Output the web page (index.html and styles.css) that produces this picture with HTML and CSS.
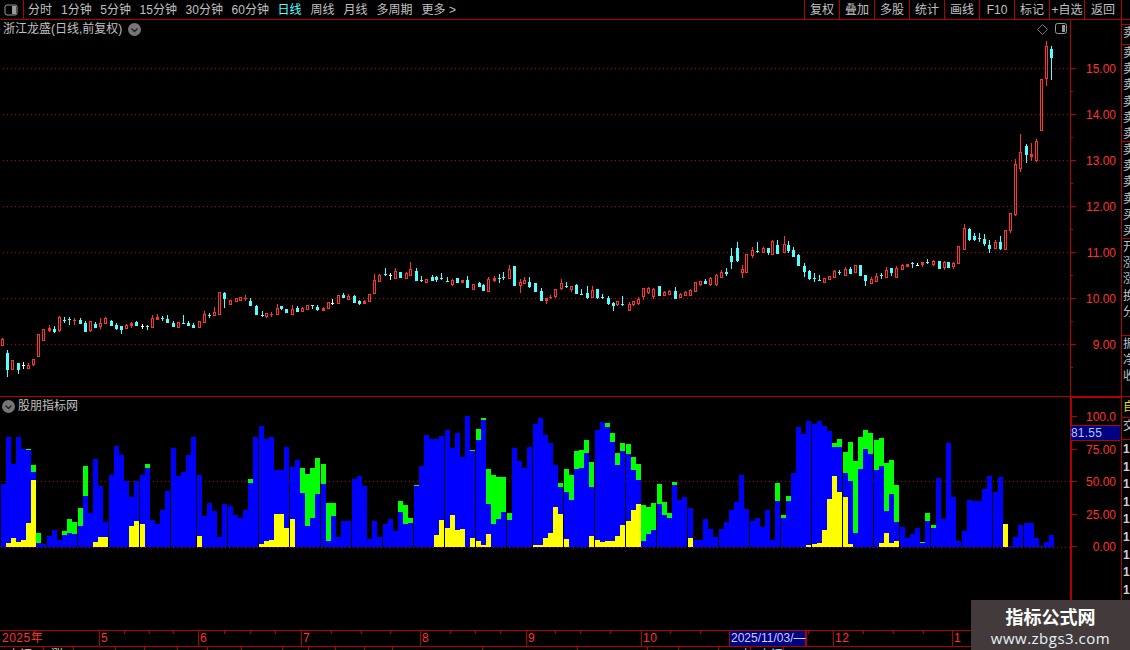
FILE: index.html
```html
<!DOCTYPE html>
<html lang="zh">
<head>
<meta charset="utf-8">
<title>浙江龙盛</title>
<link rel="stylesheet" href="styles.css">
</head>
<body>
<div class="app">
  <header class="toolbar">
    <button class="layout-btn" aria-label="layout">
      <svg width="14" height="12" viewBox="0 0 14 12"><rect x="1" y="1" width="12" height="10" rx="2" class="ico-line"/><rect x="8" y="2" width="4" height="8" class="ico-fill"/></svg>
    </button>
    <nav class="periods">
      <span>分时</span><span class="num">1分钟</span><span class="num">5分钟</span><span class="num">15分钟</span><span class="num">30分钟</span><span class="num">60分钟</span><span class="active">日线</span><span>周线</span><span>月线</span><span>多周期</span><span>更多 &gt;</span>
    </nav>
    <div class="actions">
      <span>复权</span><span>叠加</span><span>多股</span><span>统计</span><span>画线</span><span>F10</span><span>标记</span><span>+自选</span><span class="last">返回</span>
    </div>
  </header>

  <div class="workspace">
    <div class="charts">
      <section class="panel panel-main">
        <div class="plot">
          <svg id="candles" class="fill-svg"></svg>
          <div class="title-row">
            <span>浙江龙盛(日线,前复权)</span>
            <svg class="chev" width="13" height="13" viewBox="0 0 13 13"><circle cx="6.5" cy="6.5" r="6.5" class="chev-bg"/><path d="M3.5 5.5l3 3 3-3" class="chev-line"/></svg>
          </div>
          <div class="tools">
            <svg width="11" height="11" viewBox="0 0 11 11"><path d="M5.5 .5l5 5-5 5-5-5z" class="tool-line"/></svg>
            <svg width="13" height="12" viewBox="0 0 13 12"><rect x=".5" y=".5" width="11" height="10" rx="2" class="ico-line"/><rect x="7" y="2" width="3" height="7" class="ico-fill"/></svg>
          </div>
        </div>
        <svg id="price-axis" class="axis"></svg>
      </section>
      <section class="panel panel-ind">
        <div class="plot">
          <svg id="bars" class="fill-svg"></svg>
          <div class="title-row ind-title">
            <svg class="chev" width="13" height="13" viewBox="0 0 13 13"><circle cx="6.5" cy="6.5" r="6.5" class="chev-bg"/><path d="M3.5 5.5l3 3 3-3" class="chev-line"/></svg>
            <span>股朋指标网</span>
          </div>
        </div>
        <div class="axis-wrap">
          <svg id="ind-axis" class="axis axis-ind"></svg>
          <div class="value-tag">81.55</div>
        </div>
      </section>
    </div>
    <aside class="side" id="side"></aside>
  </div>

  <div class="timeaxis" id="timeaxis"></div>
  <div class="statusbar" id="statusbar"></div>

  <div class="watermark">
    <strong>指标公式网</strong>
    <span>www.zbgs3.com</span>
  </div>
</div>
<script src="chart.js"></script>
</body>
</html>
```

FILE: styles.css
```css
* { box-sizing: border-box; }
html, body { margin: 0; padding: 0; background: #000; }
body {
  width: 1130px;
  height: 650px;
  overflow: hidden;
  font: 12px/1 "Liberation Sans", "Noto Sans CJK SC", sans-serif;
  color: #c0c0c0;
}
.app { position: relative; width: 1130px; height: 650px; display: flex; flex-direction: column; overflow: hidden; }

.toolbar { display: flex; height: 20px; flex: none; border-bottom: 1px solid #b00000; align-items: stretch; }
.layout-btn { width: 24px; padding: 0 0 0 4px; background: none; border: 0; border-right: 1px solid #b00000; display: flex; align-items: center; }
.ico-line { fill: none; stroke: #9a9a9a; stroke-width: 1; }
.ico-fill { fill: #9a9a9a; }
.periods { display: flex; gap: 9px; padding-left: 4px; align-items: center; white-space: nowrap; }
.periods .num { margin-right: -.4px; }
.periods .active { color: #54ffff; }
.actions { display: flex; margin-left: auto; margin-right: 8px; }
.actions span { width: 35px; border-left: 1px solid #b00000; display: flex; align-items: center; justify-content: center; white-space: nowrap; }
.actions .last { width: 38px; border-right: 1px solid #b00000; }

.workspace { display: flex; height: 610px; flex: none; }
.charts { width: 1121px; display: flex; flex-direction: column; flex: none; }
.panel { display: flex; flex: none; }
.panel-main { height: 377px; border-bottom: 1px solid #b00000; }
.panel-ind { height: 233px; }
.plot { position: relative; width: 1070px; flex: none; }
.fill-svg { display: block; width: 1070px; height: 100%; }
.axis { display: block; width: 51px; height: 100%; flex: none; }
.axis-wrap { position: relative; width: 51px; flex: none; border-top: 1px solid #b00000; }
.axis-ind { height: 232px; }

.title-row { position: absolute; left: 3px; top: 2px; display: flex; align-items: center; gap: 6px; white-space: nowrap; line-height: 14px; }
.chev { flex: none; display: block; }
.chev-bg { fill: #777; }
.chev-line { fill: none; stroke: #222; stroke-width: 1.4; }
.ind-title { left: 2px; top: 2px; gap: 3px; }
.tools { position: absolute; right: 2px; top: 3px; display: flex; align-items: center; gap: 7px; }
.tool-line { fill: none; stroke: #777; stroke-width: 1; }

.value-tag {
  position: absolute; left: 1px; top: 27px; width: 49px; height: 16px;
  background: #000080; border-top: 1px solid #b00000; border-bottom: 1px solid #b00000;
  color: #b9c4ff; line-height: 14px; letter-spacing: .2px;
}

.side { width: 9px; flex: none; border-left: 1px solid #b00000; overflow: hidden; display: flex; flex-direction: column; font-size: 12px; }
.cell { flex: none; overflow: hidden; width: 12px; padding-left: 1px; border-bottom: 1px solid #b00000; line-height: 16.2px; white-space: pre-line; }
.cell-yellow { color: #e0e000; line-height: 20px; }
.cell-nums { border-bottom: 0; line-height: 17.6px; padding-top: 1px; font-weight: 700; color: #d0d0d0; }

.timeaxis { position: relative; display: flex; height: 17px; flex: none; border-top: 1px solid #b00000; border-bottom: 1px solid #b00000; color: #ff3232; font-size: 12px; }
.tcell { flex: none; border-left: 1px solid #b00000; padding-left: 1px; line-height: 15px; white-space: nowrap; letter-spacing: .5px; }
.tcell:first-child { border-left: 0; padding-left: 2px; }
.tcell.cursor { background: #000080; color: #c8d0ff; border: 1px solid #b00000; border-width: 0 1px; letter-spacing: 0; line-height: 14px; padding-left: 1px; }
.tick { position: absolute; top: 0; width: 1px; height: 3px; background: #b00000; }

.statusbar { display: flex; flex: 1; overflow: hidden; color: #d0d0d0; }
.scell { flex: none; border-left: 1px solid #b00000; padding-top: 1px; white-space: nowrap; line-height: 14px; }
.scell:first-child { border-left: 0; }
.scell.up { color: #54ffff; }

.watermark {
  position: absolute; left: 971px; top: 600px; width: 159px; height: 50px;
  background: #433b3b; color: #fff;
  display: flex; flex-direction: column; align-items: center; padding-top: 5px; gap: 3px;
}
.watermark strong { font-size: 18px; line-height: 22px; font-family: "Noto Sans CJK SC", sans-serif; }
.watermark span { font-size: 15px; line-height: 17px; letter-spacing: .5px; color: #e8f2fa; font-family: "Open Sans", sans-serif; }

.lbl { fill: #ff3232; font: 12px "Liberation Sans", sans-serif; text-anchor: end; }
```

FILE: chart.js
```js
const NS = 'http://www.w3.org/2000/svg';
const RED = '#ff3232', CYAN = '#54ffff', WHITE = '#ffffff', LINE = '#b00000', DOT = '#c00000';

function el(parent, name, attrs, text) {
  const e = document.createElementNS(NS, name);
  for (const k in attrs) e.setAttribute(k, attrs[k]);
  if (text !== undefined) e.textContent = text;
  parent.appendChild(e);
  return e;
}
const rect = (p, x, y, w, h, fill) => el(p, 'rect', { x, y, width: w, height: h, fill, 'shape-rendering': 'crispEdges' });

function setup(id, vb) {
  const s = document.getElementById(id);
  s.setAttribute('viewBox', vb);
  s.setAttribute('preserveAspectRatio', 'xMinYMin slice');
  return s;
}
function dotted(s, y, x1, x2) {
  for (let x = x1; x < x2; x += 4) rect(s, x, y, 1, 1, DOT);
}

/* ---------- candles: [xz, type, bodyTop, bodyBottom, high, low] ---------- */
const c9 = [[7,'r',118,135,114,135],[22,'c',159,207,150,231],[37,'r',181,207,181,210],[55,'c',189,207,189,222],[69,'w',196,196,186,207],[85,'r',195,204,189,207],[100,'r',178,192,178,198],[115,'r',102,168,102,171],[130,'r',87,119,87,119],[148,'r',84,90,75,96],[163,'c',87,93,78,99],[178,'r',51,90,48,96],[193,'c',60,60,51,69],[208,'c',57,57,51,75],[223,'r',60,60,54,75],[241,'c',60,69,54,72],[256,'c',69,93,63,93],[271,'r',64,90,64,96],[286,'c',72,81,66,84],[301,'r',69,78,54,87],[316,'r',54,69,51,72],[334,'c',63,75,60,78],[349,'c',75,84,69,90],[364,'c',78,87,78,102],[379,'r',75,84,72,84],[394,'r',69,75,66,84],[409,'c',66,75,63,78],[427,'w',78,78,72,87],[442,'c',78,78,75,90],[457,'r',54,81,45,81],[472,'r',51,57,42,57],[487,'c',54,54,48,63],[502,'c',57,66,45,66],[520,'c',69,78,63,81],[535,'r',66,81,66,84],[550,'c',69,69,45,72],[565,'c',69,75,63,75],[580,'c',75,81,69,84],[598,'r',63,81,63,81],[613,'r',42,66,33,69],[628,'c',45,45,39,54],[643,'r',36,45,21,48],[658,'r',-24,42,-24,42],[673,'c',-21,-6,-24,24]];
const c12 = [[0,'r',195,207,195,207],[12,'r',190,199,190,199],[22,'r',186,195,186,195],[32,'r',190,190,181,199],[44,'c',199,210,190,210],[55,'c',213,237,210,240],[68,'c',240,240,228,246],[78,'r',234,244,234,249],[88,'r',237,237,231,246],[100,'r',219,237,207,237],[110,'c',213,219,213,225],[121,'c',222,231,222,231],[134,'r',222,236,210,236],[144,'c',219,228,213,231],[155,'r',219,228,216,231],[166,'r',210,222,210,222],[177,'c',211,211,211,222],[187,'c',216,222,210,228],[200,'r',219,225,216,228],[211,'r',201,219,201,219],[220,'w',204,204,192,210],[233,'r',180,204,180,207],[243,'c',180,186,174,189],[254,'r',183,192,177,192],[266,'c',183,201,180,204],[277,'c',198,204,195,210],[288,'r',198,204,195,207],[298,'r',178,198,178,198],[310,'r',135,174,117,174],[320,'r',120,138,117,141],[332,'c',117,117,99,123],[344,'w',120,120,114,135],[355,'r',108,129,99,129],[365,'c',111,126,111,126],[377,'r',114,129,111,132],[387,'r',102,120,81,120],[400,'c',108,135,99,135],[411,'c',135,135,123,141],[421,'r',132,141,132,141],[433,'c',126,135,120,138],[443,'c',126,132,123,141],[454,'c',129,129,114,135],[466,'c',138,138,126,141],[477,'r',135,147,132,153],[488,'c',129,141,129,141],[499,'r',135,141,135,141],[510,'c',135,156,123,156],[521,'r',147,162,147,162],[534,'c',144,153,141,156],[544,'c',150,165,147,165],[555,'r',132,168,126,171],[566,'r',129,135,123,141],[577,'c',129,129,117,144],[587,'c',126,126,111,135],[600,'r',102,129,90,132],[611,'c',93,150,93,150],[622,'r',141,150,132,174],[632,'r',135,144,126,144],[643,'c',141,153,126,159],[656,'c',144,168,144,171],[667,'c',168,195,159,195],[678,'r',189,195,189,207],[688,'r',186,186,180,192],[699,'r',162,183,162,189],[710,'r',144,159,132,165],[722,'c',153,153,141,159],[733,'r',153,162,153,171],[744,'c',150,174,147,177],[755,'c',177,177,162,177],[766,'c',174,186,153,192],[777,'r',165,186,153,189],[789,'c',162,186,162,192],[800,'c',186,186,177,192],[811,'c',189,204,183,210],[822,'c',204,210,201,228],[832,'r',198,207,198,213],[843,'c',207,207,183,213],[856,'r',207,225,201,228],[866,'r',198,207,198,213],[877,'r',192,204,186,210],[887,'r',159,183,159,195],[898,'r',159,171,156,177],[909,'r',162,183,159,192],[922,'c',153,180,153,180],[933,'r',171,180,168,183],[944,'r',168,177,165,180],[955,'c',168,189,156,192],[966,'r',177,186,174,189],[977,'r',171,180,168,183],[988,'r',165,180,162,180],[999,'r',141,168,141,168],[1010,'r',138,147,138,153],[1021,'c',138,144,132,144],[1032,'r',129,147,126,153],[1043,'r',120,147,117,153],[1055,'r',111,126,105,126],[1066,'c',111,114,99,123],[1077,'c',63,78,39,102],[1088,'c',39,75,21,81],[1099,'r',102,111,90,129],[1109,'r',57,111,57,111],[1122,'r',45,60,36,69],[1133,'c',48,48,21,54],[1144,'r',39,51,36,54],[1155,'c',39,51,39,60],[1165,'r',18,57,15,60],[1176,'c',30,54,15,54],[1189,'r',27,51,3,54],[1199,'c',30,45,18,54],[1210,'c',45,63,36,66],[1220,'c',60,90,57,93],[1232,'c',93,108,84,126],[1243,'c',108,129,105,135],[1255,'c',129,129,114,141],[1266,'c',135,135,120,138],[1276,'r',129,141,129,141],[1287,'r',123,132,123,135],[1298,'r',108,126,105,126],[1309,'c',111,111,105,120],[1321,'r',102,120,96,120],[1332,'c',102,114,96,117],[1343,'r',90,111,90,111],[1354,'c',90,120,90,120],[1365,'c',120,135,120,153],[1376,'r',132,144,126,144],[1388,'r',123,138,114,138],[1399,'c',120,120,114,132],[1410,'r',105,126,96,129],[1420,'c',99,111,99,123],[1431,'r',99,126,93,126],[1443,'r',90,102,87,105],[1454,'r',87,93,87,96],[1465,'c',84,84,81,99],[1475,'w',90,90,84,93],[1487,'r',81,87,81,96],[1498,'c',81,81,72,87],[1510,'r',78,87,75,93],[1522,'c',78,99,78,99],[1533,'r',81,96,78,105],[1543,'c',81,96,81,99]];
const c10 = [[10,'r',699,708,696,717],[25,'r',648,699,648,699],[43,'r',594,657,582,657],[58,'c',597,627,594,633],[73,'c',618,627,609,633],[88,'c',624,624,609,636],[103,'c',627,639,612,648],[118,'c',645,654,630,669],[136,'r',636,654,630,654],[151,'c',636,654,618,660],[166,'r',600,657,600,657],[181,'r',549,600,549,609],[196,'r',402,552,387,558],[211,'r',366,414,312,426],[229,'c',348,372,342,399],[244,'r',372,378,339,393],[259,'r',333,390,327,396],[274,'r',148,300,148,300],[289,'r',48,144,33,168],[304,'c',57,81,48,150]];

function drawCandle(s, cx, type, top, bot, hi, lo) {
  const col = type === 'r' ? RED : type === 'c' ? CYAN : WHITE;
  rect(s, cx, hi, 1, Math.max(lo - hi, 1), col);
  const h = bot - top;
  if (h < 1) {
    rect(s, cx - 1, top, 3, 1, col);
  } else if (type === 'r' && h >= 3) {
    rect(s, cx - 1, top, 3, h + 1, col);
    rect(s, cx, top + 1, 1, h - 1, '#000');
  } else {
    rect(s, cx - 1, top, 3, h + 1, col);
  }
}

const main = setup('candles', '0 20 1070 376');
[68, 114, 160, 206, 252, 298, 344].forEach(y => dotted(main, y, 3, 1070));
c9.forEach(c => drawCandle(main, Math.round(c[0] / 3), c[1], 300 + Math.round(c[2] / 3), 300 + Math.round(c[3] / 3), 300 + Math.round(c[4] / 3), 300 + Math.round(c[5] / 3)));
c12.forEach(c => drawCandle(main, Math.round(230 + c[0] / 2.148), c[1], 235 + Math.round(c[2] / 3), 235 + Math.round(c[3] / 3), 235 + Math.round(c[4] / 3), 235 + Math.round(c[5] / 3)));
c10.forEach(c => drawCandle(main, Math.round(950 + c[0] / 3), c[1], 30 + Math.round(c[2] / 3), 30 + Math.round(c[3] / 3), 30 + Math.round(c[4] / 3), 30 + Math.round(c[5] / 3)));

/* ---------- price axis ---------- */
const pa = setup('price-axis', '1070 20 51 376');
rect(pa, 1070, 20, 1, 376, LINE);
[['15.00', 68], ['14.00', 114], ['13.00', 160], ['12.00', 206], ['11.00', 252], ['10.00', 298], ['9.00', 344]].forEach(([t, y]) => {
  rect(pa, 1071, y, 5, 1, LINE);
  rect(pa, 1071, y + 23, 2, 1, LINE);
  el(pa, 'text', { x: 1116, y: y + 5, class: 'lbl' }, t);
});

/* ---------- indicator bars: [xz, blueTop, greenTop, yellowTop]; base z = 455 ---------- */
const chunks = [
  [0, [[3,267],[18,126,0,444],[33,207,0,429],[48,126,0,441],[63,162,0,435],[78,165,162,384],[93,231,210,255],[108,444,414],[123,447],[141,423],[156,405],[171,435],[186,420,408],[201,414,372],[216,417,381],[234,393,339],[249,303,213],[264,354],[279,192,0,441],[294,273,0,426],[309,381,0,426],[327,240],[342,153],[357,180],[372,258],[387,306,0,393],[402,258,0,378],[420,240,0,387],[435,219,207],[450,375],[465,387],[480,345],[495,288],[513,159],[528,243],[543,231],[558,180],[573,126],[591,240,0,423],[606,363],[621,324],[636,348],[651,426],[666,327],[684,333],[699,360],[714,369],[729,345],[744,264,252],[759,126],[777,93,0,447],[792,132,0,438],[807,126,0,435]]],
  [270, [[12,225,0,357],[27,225,0,357],[42,156,0,399],[60,216,0,372],[75,195],[90,294,219],[105,393,237],[120,369,219],[135,297,189],[153,267,207],[168,438,324],[183,363,324],[198,426],[213,378],[228,378],[246,252],[261,243],[276,273],[291,432],[306,378],[321,426],[339,387],[354,372],[369,408],[384,351,318],[399,387,330],[414,384,369],[432,273,270],[447,213],[462,120],[477,132],[492,132,0,420],[507,123,0,375],[525,105,0,399],[540,159,0,360],[555,114,0,405],[570,186,0,402],[585,63],[600,168,165,429],[618,135,102,438],[633,75,69,450],[648,327,222,417],[663,387,240],[678,372,246],[693,351,246],[711,375,354],[726,159],[741,198],[756,219],[771,156],[789,87,0,450],[804,69,0,450]]],
  [540, [[9,120,0,429],[24,144,0,414],[39,210,0,336],[54,276,264,357],[72,291,222,432],[87,315,240],[102,222,168],[117,219,165],[132,174,135],[147,276,201,423],[165,105,0,435],[180,81,0,441],[195,96,84,438],[210,141,114,438],[225,210,174,423],[240,168,144,390],[258,177,147,378],[273,225,186,345],[288,255,207,327],[303,438,330],[318,417,336],[333,405,324],[351,327,267],[366,360,321],[381,369,354],[396,270,261],[411,315],[426,306],[444,339,0,429],[459,435],[474,435],[489,372],[504,402],[519,426],[537,402],[552,381],[567,345],[582,321],[597,240],[612,342],[630,378],[645,369],[660,396],[675,345],[690,435],[705,318,264],[723,369,360],[738,318,303]]],
  [790, [[3,234],[18,96],[33,117],[48,78,0,450],[66,87,0,447],[81,78,0,444],[96,93,0,405],[111,108,0,312],[126,156,144,243],[141,156,132,291],[159,234,171,306],[174,258,141,447],[189,414,198],[204,222,126],[219,162,105],[234,177,114],[252,225,135],[267,213,129,444],[282,348,204,414],[297,297,195,444],[312,381,270,438],[330,396],[345,429],[360,417],[375,399],[390,444,441],[405,378,354],[423,399,390],[438,249],[453,372],[468,144],[483,306],[498,438],[516,408],[531,315],[546,318],[561,318],[576,282],[591,243],[609,291],[624,246],[639,387,0,387],[654,453],[669,426],[684,390],[702,384],[717,384],[732,429],[747,453],[762,441],[777,420]]]
];
const ind = setup('bars', '0 397 1070 233');
dotted(ind, 481, 1, 1070);
dotted(ind, 547, 1, 1070);
const Y = z => 395 + Math.round(z / 3);
const BASE = 547;
chunks.forEach(([off, rows]) => rows.forEach(([z, top, g, yl]) => {
  const x = off + Math.round(z / 3);
  rect(ind, x, Y(top), 5, BASE - Y(top), '#0000ff');
  if (g) rect(ind, x, Y(g), 5, Y(top) - Y(g), '#00ff00');
  if (yl) rect(ind, x, Y(yl), 5, BASE - Y(yl), '#ffff00');
}));

/* ---------- indicator axis ---------- */
const ia = setup('ind-axis', '1070 398 51 232');
rect(ia, 1070, 398, 2, 232, LINE);
[['100.0', 416], ['75.00', 449], ['50.00', 481], ['25.00', 514], ['0.00', 546]].forEach(([t, y]) => {
  rect(ia, 1072, y, 5, 1, LINE);
  el(ia, 'text', { x: 1116, y: y + 5, class: 'lbl' }, t);
});

/* ---------- right-hand quote strip, clipped by the window ---------- */
const side = document.getElementById('side');
[
  [5, '', ''], [20, '卖', ''], [97, '卖\n卖\n卖\n卖\n卖\n卖', ''], [97, '卖\n卖\n卖\n卖\n买\n买', ''],
  [97, '开\n涨\n涨\n换\n分\n', ''], [61, '振\n净\n收', ''], [21, '自', 'cell-yellow'], [22, '交', ''],
  [190, '1\n1\n1\n1\n1\n1\n1\n1\n1\n1\n1', 'cell-nums']
].forEach(([h, t, cls]) => {
  const d = document.createElement('div');
  d.className = 'cell ' + cls;
  d.style.height = h + 'px';
  d.textContent = t;
  side.appendChild(d);
});

/* ---------- time axis ---------- */
const ta = document.getElementById('timeaxis');
[[0, 99, '2025年'], [99, 198, '5'], [198, 301, '6'], [301, 420, '7'], [420, 526, '8'], [526, 641, '9'], [641, 729, '10'], [729, 806, '2025/11/03/—', 'cursor'], [806, 833, ''], [833, 952, '12'], [952, 1122, '1']].forEach(([a, b, t, cls]) => {
  const d = document.createElement('div');
  d.className = 'tcell ' + (cls || '');
  d.style.width = (b - a) + 'px';
  d.textContent = t;
  ta.appendChild(d);
});
[124, 149, 173, 224, 250, 275, 331, 361, 390, 450, 475, 500, 555, 580, 610, 670, 700, 808, 863, 893, 923, 1071].forEach(x => {
  const t = document.createElement('i');
  t.className = 'tick';
  t.style.left = x + 'px';
  ta.appendChild(t);
});

/* ---------- status bar, only the top of its text fits in the window ---------- */
const sb = document.getElementById('statusbar');
[[43, '上证', 8], [30, '涨', 7], [42], [29], [33], [30], [34], [41], [26], [27], [29], [28], [90], [95], [70], [31], [40], [32, '上', 21], [33, '上证', 8, 'up'], [99]].forEach(([w, t, pad, cls]) => {
  const d = document.createElement('div');
  d.className = 'scell ' + (cls || '');
  d.style.width = w + 'px';
  d.style.paddingLeft = (pad || 0) + 'px';
  d.textContent = t || '';
  sb.appendChild(d);
});
```
